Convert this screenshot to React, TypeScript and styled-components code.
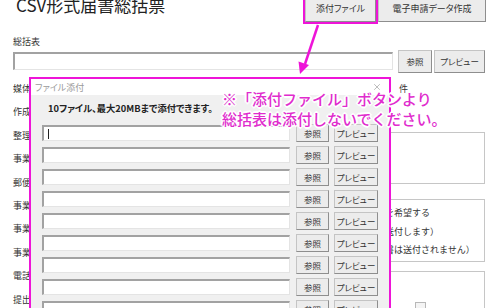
import React from 'react';
import styled, { createGlobalStyle } from 'styled-components';
import { X } from 'lucide-react';

const MAGENTA = '#ee14d8';

const GlobalStyle = createGlobalStyle`
  html, body {
    margin: 0;
    padding: 0;
    background: #fff;
  }
  body {
    font-family: "Noto Sans CJK JP", "Noto Sans", sans-serif;
    font-feature-settings: "palt";
    color: #333;
  }
`;

const Screen = styled.div`
  position: relative;
  width: 500px;
  height: 308px;
  overflow: hidden;
  background: #fff;
`;

const Header = styled.header`
  display: flex;
  justify-content: space-between;
  align-items: flex-start;
  margin-top: -6px;
  padding: 0 14px 0 16px;
`;

const Title = styled.h1`
  margin: 0;
  font-size: 17px;
  line-height: 21px;
  font-weight: 400;
  color: #222;
  font-feature-settings: normal;
`;

const ButtonGroup = styled.div<{ $gap: number }>`
  display: flex;
  gap: ${(p) => p.$gap}px;
`;

const Button = styled.button<{ $w: number; $h: number; $size?: number; $highlight?: boolean }>`
  box-sizing: border-box;
  width: ${(p) => p.$w}px;
  height: ${(p) => p.$h}px;
  padding: 0;
  flex: none;
  font-family: inherit;
  font-feature-settings: "palt";
  font-size: ${(p) => p.$size ?? 8.5}px;
  color: #333;
  background: #ececec;
  border: 1px solid #c4c4c4;
  border-right-color: #8e8e8e;
  border-bottom-color: #8e8e8e;
  outline: ${(p) => (p.$highlight ? `2px solid ${MAGENTA}` : 'none')};
`;

const Section = styled.section`
  padding: 0 15px 0 13px;
`;

const SmallLabel = styled.div`
  margin-top: 13px;
  font-size: 9px;
  line-height: 14px;
  color: #333;
`;

const FileRow = styled.div<{ $gap: number; $h: number }>`
  display: flex;
  align-items: center;
  gap: ${(p) => p.$gap}px;
  height: ${(p) => p.$h}px;
`;

const Field = styled.div<{ $w: number; $h: number }>`
  box-sizing: border-box;
  display: flex;
  align-items: center;
  flex: none;
  width: ${(p) => p.$w}px;
  height: ${(p) => p.$h}px;
  padding-left: 4px;
  background: #fff;
  border-top: 2px solid #a2a2a2;
  border-left: 2px solid #a2a2a2;
  border-right: 1px solid #e4e4e4;
  border-bottom: 1px solid #e4e4e4;
`;

const Caret = styled.span`
  width: 1px;
  height: 10px;
  background: #222;
`;

const FormGrid = styled.div`
  display: grid;
  grid-template-columns: 240px 1fr;
  margin-top: 4px;
`;

const LabelList = styled.div`
  display: flex;
  flex-direction: column;
`;

const FormLabel = styled.div`
  height: 23.4px;
  line-height: 23.4px;
  font-size: 9px;
  color: #333;
`;

const SideColumn = styled.div`
  display: flex;
  flex-direction: column;
`;

const CountRow = styled.div`
  display: flex;
  align-items: center;
  justify-content: flex-end;
  gap: 16px;
  height: 23.4px;
  padding-right: 77px;
  font-size: 9px;
`;

const Panel = styled.div<{ $top: number; $h: number }>`
  box-sizing: border-box;
  margin-top: ${(p) => p.$top}px;
  height: ${(p) => p.$h}px;
  border: 1px solid #c6c6c6;
  background: #fff;
  padding: 4px 0 0 104px;
  position: relative;
`;

const PanelLine = styled.div`
  height: 18.5px;
  line-height: 18.5px;
  font-size: 9px;
  font-feature-settings: normal;
  color: #333;
  white-space: nowrap;
`;

const CheckBox = styled.span`
  position: absolute;
  left: 161px;
  top: 30px;
  width: 9px;
  height: 9px;
  border: 1px solid #b8b8b8;
  background: #f4f4f4;
`;

/* overlay: the dialog that is opened over the form */
const Dialog = styled.div`
  position: absolute;
  left: 29px;
  top: 77px;
  width: 362px;
  height: 250px;
  box-sizing: border-box;
  border: 2px solid ${MAGENTA};
  background: #f0f0f0;
  z-index: 2;
`;

const TitleBar = styled.div`
  display: flex;
  justify-content: space-between;
  align-items: center;
  height: 16px;
  padding: 0 7px 0 4px;
  background: #fff;
  font-size: 9px;
  color: #9a9a9a;
`;

const DialogBody = styled.div`
  display: flex;
  flex-direction: column;
  gap: 4px;
  padding: 6px 11px 0;
`;

const Message = styled.p`
  margin: 0 0 5px 6px;
  font-size: 9.3px;
  line-height: 14px;
  font-weight: 700;
  color: #222;
`;

const Annotation = styled.div`
  position: absolute;
  left: 222px;
  top: 89px;
  z-index: 4;
  font-size: 15px;
  line-height: 19.5px;
  font-weight: 500;
  font-feature-settings: normal;
  color: #e02ccd;
  white-space: nowrap;
  text-shadow:
    2px 0 0 #fff, -2px 0 0 #fff, 0 2px 0 #fff, 0 -2px 0 #fff,
    1px 1px 0 #fff, -1px -1px 0 #fff, 1px -1px 0 #fff, -1px 1px 0 #fff,
    0 0 3px #fff;
`;

const ArrowLayer = styled.svg`
  position: absolute;
  left: 0;
  top: 0;
  z-index: 3;
`;

const formLabels = [
  '媒体通番',
  '作成年月日',
  '整理記号',
  '事業所番号',
  '郵便番号',
  '事業所所在地',
  '事業所名称',
  '事業主氏名',
  '電話番号',
  '提出元ID',
];

const Arrow = () => (
  <ArrowLayer width="500" height="90" viewBox="0 0 500 90">
    <line x1="318" y1="25" x2="305" y2="64" stroke={MAGENTA} strokeWidth="2.5" />
    <polygon points="300,74 298.5,61.5 309,65" fill={MAGENTA} />
  </ArrowLayer>
);

const App = () => {
  return (
    <Screen>
      <GlobalStyle />
      <Header>
        <Title>CSV形式届書総括票</Title>
        <ButtonGroup $gap={2}>
          <Button $w={71} $h={28} $size={9} $highlight>
            添付ファイル
          </Button>
          <Button $w={108} $h={28} $size={9}>
            電子申請データ作成
          </Button>
        </ButtonGroup>
      </Header>

      <Section>
        <SmallLabel>総括表</SmallLabel>
        <FileRow $gap={5} $h={24}>
          <Field $w={380} $h={18} />
          <ButtonGroup $gap={2}>
            <Button $w={34} $h={23}>参照</Button>
            <Button $w={51} $h={23}>プレビュー</Button>
          </ButtonGroup>
        </FileRow>

        <FormGrid>
          <LabelList>
            {formLabels.map((l, i) => (
              <FormLabel key={i}>{l}</FormLabel>
            ))}
          </LabelList>
          <SideColumn>
            <CountRow>
              <Field $w={40} $h={16} />
              件
            </CountRow>
            <Panel $top={32} $h={52} />
            <Panel $top={15} $h={63}>
              <PanelLine>返戻書を希望する</PanelLine>
              <PanelLine>（紙で送付します）</PanelLine>
              <PanelLine>（通知書は送付されません）</PanelLine>
            </Panel>
            <Panel $top={9} $h={60}>
              <CheckBox />
            </Panel>
          </SideColumn>
        </FormGrid>
      </Section>

      <Dialog>
        <TitleBar>
          <span>ファイル添付</span>
          <X size={10} strokeWidth={1.4} color="#8c8c8c" />
        </TitleBar>
        <DialogBody>
          <Message>10ファイル、最大20MBまで添付できます。</Message>
          {Array.from({ length: 9 }).map((_, i) => (
            <FileRow key={i} $gap={6} $h={18}>
              <Field $w={248} $h={16}>{i === 0 && <Caret />}</Field>
              <ButtonGroup $gap={5}>
                <Button $w={33} $h={18}>参照</Button>
                <Button $w={44} $h={18}>プレビュー</Button>
              </ButtonGroup>
            </FileRow>
          ))}
        </DialogBody>
      </Dialog>

      <Arrow />

      <Annotation>
        ※「添付ファイル」ボタンより
        <br />
        総括表は添付しないでください。
      </Annotation>
    </Screen>
  );
};

export default App;
